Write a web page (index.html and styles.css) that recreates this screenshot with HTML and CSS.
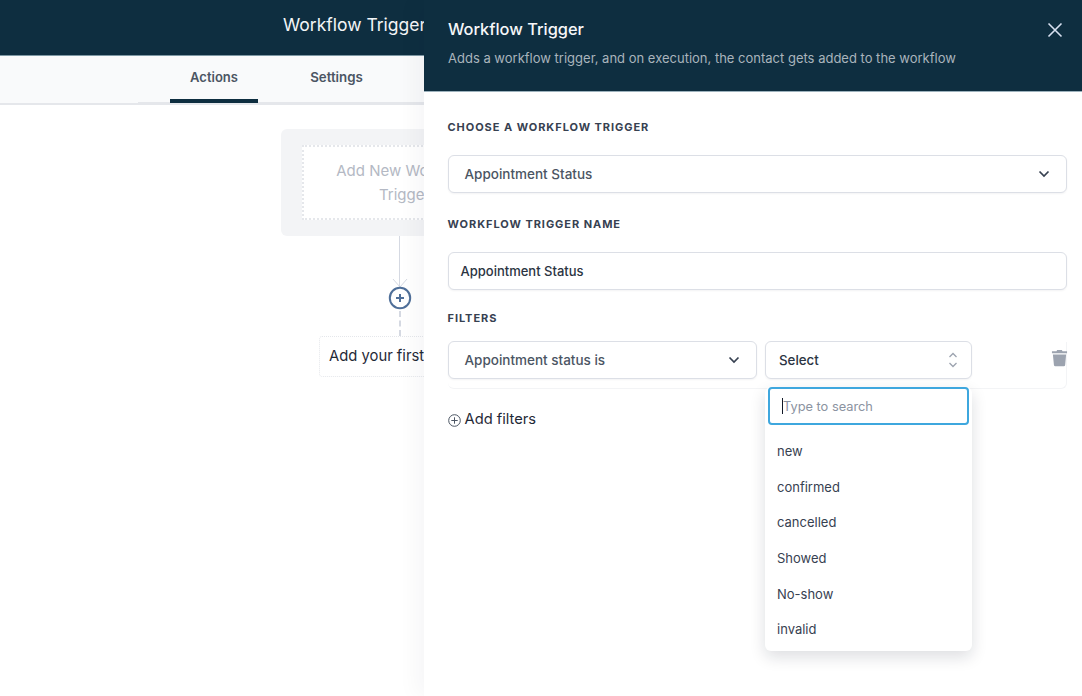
FILE: index.html
```html
<!DOCTYPE html>
<html lang="en">
<head>
<meta charset="utf-8">
<title>Workflow Trigger</title>
<link rel="stylesheet" href="styles.css">
</head>
<body>
<div class="app">
  <header class="topbar"><span class="topbar-title">Workflow Trigger</span></header>
  <nav class="tabs">
    <div class="tab-strip">
      <a class="tab tab-active">Actions</a>
      <a class="tab">Settings</a>
    </div>
  </nav>
  <main class="canvas">
    <div class="trigger-card">
      <div class="trigger-inner">Add New Workflow<br>Trigger</div>
    </div>
    <div class="line-solid"></div>
    <svg class="arrow" width="16" height="10" viewBox="0 0 16 10"><path d="M1 1l7 8 7-8" fill="none" stroke="#d5d9e2" stroke-width="1"/></svg>
    <div class="plus-node">
      <svg width="24" height="24" viewBox="0 0 24 24"><circle cx="12" cy="12" r="10.2" fill="#fff" stroke="#4f6f99" stroke-width="2"/><path d="M12 8v8M8 12h8" stroke="#4f6f99" stroke-width="2"/></svg>
    </div>
    <div class="line-dashed"></div>
    <div class="first-action">Add your first Action</div>
  </main>
</div>

<aside class="panel">
  <header class="panel-head">
    <div class="panel-head-text">
      <h2 class="panel-title">Workflow Trigger</h2>
      <p class="panel-sub">Adds a workflow trigger, and on execution, the contact gets added to the workflow</p>
    </div>
    <svg class="panel-close" width="16" height="16" viewBox="0 0 16 16"><path d="M1.5 1.5l13 13M14.5 1.5l-13 13" stroke="#d7e0f0" stroke-width="1.6" fill="none"/></svg>
  </header>
  <div class="panel-body">
    <label class="field-label label-first">CHOOSE A WORKFLOW TRIGGER</label>
    <div class="control control-select">
      <span class="control-text">Appointment Status</span>
      <svg width="12" height="8" viewBox="0 0 12 8"><path d="M1.5 1.5L6 6l4.5-4.5" fill="none" stroke="#374151" stroke-width="1.7"/></svg>
    </div>
    <label class="field-label label-name">WORKFLOW TRIGGER NAME</label>
    <div class="control control-input">Appointment Status</div>
    <label class="field-label label-filters">FILTERS</label>
    <div class="filter-row">
      <div class="control control-select filter-left">
        <span class="control-text">Appointment status is</span>
        <svg width="12" height="8" viewBox="0 0 12 8"><path d="M1.5 1.5L6 6l4.5-4.5" fill="none" stroke="#374151" stroke-width="1.7"/></svg>
      </div>
      <div class="control filter-right">
        <span class="select-text">Select</span>
        <svg width="10" height="16" viewBox="0 0 10 16"><path d="M1.5 5L5 1.500 8.500 5M1.500 11L5 14.500 8.500 11" fill="none" stroke="#9ca3af" stroke-width="1.300"/></svg>
      </div>
      <svg class="trash" width="17" height="19" viewBox="0 0 18 19"><path d="M6.500 1.500h5l.7 1.300H17v2.200H1V2.800h4.800zM2 6.200h14l-1 11.300a1.500 1.500 0 0 1-1.500 1.300h-8.900A1.500 1.500 0 0 1 3.100 17.500z" fill="#9ca3af"/></svg>
    </div>
    <div class="add-filters">
      <svg width="13" height="13" viewBox="0 0 13 13"><circle cx="6.500" cy="6.500" r="5.800" fill="none" stroke="#4b5563" stroke-width="1"/><path d="M6.500 3.300v6.400M3.300 6.500h6.400" stroke="#4b5563" stroke-width="1"/></svg>
      <span>Add filters</span>
    </div>
    <div class="dropdown">
      <div class="search"><span class="caret"></span><span class="search-ph">Type to search</span></div>
      <ul class="options">
        <li>new</li>
        <li>confirmed</li>
        <li>cancelled</li>
        <li>Showed</li>
        <li>No-show</li>
        <li>invalid</li>
      </ul>
    </div>
  </div>
</aside>
</body>
</html>
```
FILE: styles.css
```css
* { box-sizing: border-box; }
html, body { margin: 0; height: 100%; }
body {
  width: 1082px;
  height: 696px;
  overflow: hidden;
  position: relative;
  background: #fff;
  font-family: Inter, "Liberation Sans", sans-serif;
  color: #1f2937;
}
.app { display: flex; flex-direction: column; height: 100%; }
.topbar {
  height: 56px;
  flex: none;
  background: #0e2e40;
  border-bottom: 1px solid #7d98a4;
  padding: 12px 0 0 283px;
}
.topbar-title { color: #f3f5f7; font-size: 17.500px; line-height: 26px; white-space: nowrap; }
.tabs {
  height: 49px;
  flex: none;
  background: #f9fafb;
  border-bottom: 2px solid #e5e7eb;
  display: flex;
  padding-left: 138px;
}
.tab-strip {
  flex: 1;
  height: 47px;
  display: flex;
  align-items: flex-start;
  padding-left: 32px;
  border-bottom: 1px solid #e5e7eb;
}
.tab {
  height: 47px;
  flex: none;
  font-size: 13px;
  font-weight: 600;
  color: #4b5563;
  line-height: 43px;
  text-align: center;
}
.tab:first-child { width: 88px; }
.tab:nth-child(2) { margin-left: 52px; width: 53px; font-size: 13.300px; }
.tab-active { border-bottom: 4px solid #0e2e40; }
.canvas {
  flex: 1;
  display: flex;
  flex-direction: column;
  align-items: flex-start;
  padding: 24px 0 0 281px;
  position: relative;
}
.trigger-card {
  width: 247px;
  height: 107px;
  flex: none;
  background: #f3f4f6;
  border-radius: 6px;
  padding: 16px 21px;
}
.trigger-inner {
  height: 75px;
  background: #fff;
  border: 2px dotted #e5e7eb;
  color: #b4b9c4;
  font-size: 15px;
  line-height: 24px;
  text-align: center;
  padding-top: 12px;
}
.line-solid { width: 1px; height: 51px; background: #d5d9e2; margin-left: 118px; flex: none; }
.arrow { margin: -9px 0 0 111px; flex: none; display: block; }
.plus-node { margin: -2px 0 0 107px; height: 24px; flex: none; }
.plus-node svg { display: block; }
.line-dashed {
  height: 25px;
  flex: none;
  margin: 1px 0 0 118px;
  border-left: 2px dashed #d5d9e2;
}
.first-action {
  margin: 0 0 0 38px;
  width: 240px;
  height: 41px;
  border: 1px dotted #e5e7eb;
  border-radius: 3px;
  font-size: 14.800px;
  line-height: 39px;
  padding-left: 9px;
  color: #1f2937;
  white-space: nowrap;
}
.panel {
  position: absolute;
  top: 0;
  left: 424px;
  width: 658px;
  height: 696px;
  background: #fff;
  box-shadow: -8px 0 20px rgba(17, 24, 39, 0.04);
  display: flex;
  flex-direction: column;
}
.panel-head {
  height: 92px;
  flex: none;
  background: #0e2e40;
  border-bottom: 1px solid #9db2bd;
  padding: 17px 19px 0 24px;
  display: flex;
  justify-content: space-between;
  align-items: flex-start;
}
.panel-title { margin: 0; font-size: 16.400px; line-height: 24px; font-weight: 500; color: #f6f7f9; }
.panel-sub { margin: 8px 0 0; font-size: 13px; line-height: 18px; color: #a9b4bc; white-space: nowrap; }
.panel-close { margin-top: 5px; }
.panel-body { flex: 1; padding: 0 15px 0 23.500px; position: relative; }
.field-label {
  display: block;
  font-size: 11px;
  line-height: 16px;
  font-weight: 700;
  letter-spacing: 0.950px;
  color: #374151;
}
.label-first { margin-top: 27px; }
.label-name { margin-top: 23px; }
.label-filters { margin-top: 20px; }
.control {
  height: 38px;
  background: #fff;
  border: 1px solid #dcdfe6;
  border-radius: 6px;
  box-shadow: 0 1px 2px rgba(17, 24, 39, 0.05);
  display: flex;
  align-items: center;
  font-size: 13px;
}
.control-select { justify-content: space-between; padding: 0 16px; margin-top: 20px; }
.control-text { color: #4b5563; font-weight: 500; font-size: 13.500px; }
.control-input { margin-top: 20px; padding-left: 12px; color: #2b3442; font-weight: 500; }
.filter-row {
  margin-top: 15.500px;
  height: 47px;
  padding-bottom: 9px;
  display: flex;
  align-items: center;
  border-bottom: 1px solid #f3f4f6;
  border-right: 1px solid #f3f4f6;
  border-radius: 0 0 6px 6px;
  position: relative;
}
.filter-left { width: 309.500px; margin-top: 0; flex: none; }
.filter-right {
  width: 207px;
  flex: none;
  margin-left: 8px;
  padding: 0 13px;
  justify-content: space-between;
}
.select-text { color: #2b3442; font-weight: 500; font-size: 13.300px; }
.trash { margin: 0 0 5px 79px; flex: none; }
.add-filters {
  margin-top: 20.500px;
  display: flex;
  align-items: center;
  gap: 4px;
  font-size: 14.700px;
  line-height: 20px;
  color: #1f2937;
}
.add-filters svg { margin-top: 2px; }
.dropdown {
  position: absolute;
  left: 341px;
  top: 295px;
  width: 207px;
  height: 264px;
  background: #fff;
  border-radius: 6px;
  box-shadow: 0 6px 16px rgba(17, 24, 39, 0.14);
  padding: 0 3px;
}
.search {
  height: 38px;
  border: 2px solid #3ea7de;
  border-radius: 4px;
  display: flex;
  align-items: center;
  padding-left: 12px;
  font-size: 12.800px;
  color: #8b93a1;
}
.caret { width: 1px; height: 16px; background: #111827; flex: none; }
.options { list-style: none; margin: 9px 0 0; padding: 0; }
.options li {
  height: 35.700px;
  line-height: 35.700px;
  padding-left: 9px;
  font-size: 13px;
  color: #374151;
}
```
